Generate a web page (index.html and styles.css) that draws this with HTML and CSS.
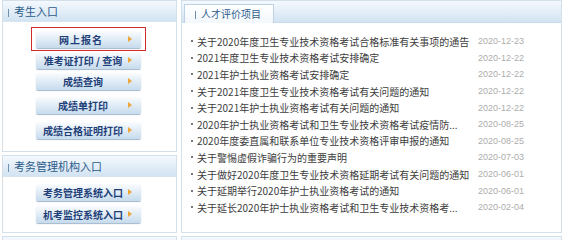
FILE: index.html
```html
<!DOCTYPE html>
<html lang="zh-CN">

<head>
    <meta charset="UTF-8">
    <title>人才评价</title>
    <link rel="stylesheet" href="styles.css">
</head>

<body>
    <div class="page">
        <div class="side">
            <div class="box">
                <div class="box-title"><span class="bar"></span>考生入口</div>
                <div class="btns exam">
                    <a class="btn current">网上报名</a>
                    <a class="btn">准考证打印 / 查询</a>
                    <a class="btn">成绩查询</a>
                    <a class="btn">成绩单打印</a>
                    <a class="btn">成绩合格证明打印</a>
                </div>
            </div>
            <div class="box">
                <div class="box-title"><span class="bar"></span>考务管理机构入口</div>
                <div class="btns org">
                    <a class="btn">考务管理系统入口</a>
                    <a class="btn">机考监控系统入口</a>
                </div>
            </div>
            <div class="box">
                <div class="box-title"></div>
            </div>
        </div>
        <div class="main">
            <div class="panel">
                <div class="tabbar">
                    <div class="tab"><span class="bar"></span>人才评价项目</div>
                </div>
                <ul class="news">
                    <li><span class="title">关于2020年度卫生专业技术资格考试合格标准有关事项的通告</span><span class="date">2020-12-23</span></li>
                    <li><span class="title">2021年度卫生专业技术资格考试安排确定</span><span class="date">2020-12-22</span></li>
                    <li><span class="title">2021年护士执业资格考试安排确定</span><span class="date">2020-12-22</span></li>
                    <li><span class="title">关于2021年度卫生专业技术资格考试有关问题的通知</span><span class="date">2020-12-22</span></li>
                    <li><span class="title">关于2021年护士执业资格考试有关问题的通知</span><span class="date">2020-12-22</span></li>
                    <li><span class="title">2020年护士执业资格考试和卫生专业技术资格考试疫情防...</span><span class="date">2020-08-25</span></li>
                    <li><span class="title">2020年度委直属和联系单位专业技术资格评审申报的通知</span><span class="date">2020-08-25</span></li>
                    <li><span class="title">关于警惕虚假诈骗行为的重要声明</span><span class="date">2020-07-03</span></li>
                    <li><span class="title">关于做好2020年度卫生专业技术资格延期考试有关问题的通知</span><span class="date">2020-06-01</span></li>
                    <li><span class="title">关于延期举行2020年护士执业资格考试的通知</span><span class="date">2020-06-01</span></li>
                    <li><span class="title">关于延长2020年护士执业资格考试和卫生专业技术资格考...</span><span class="date">2020-02-04</span></li>
                </ul>
            </div>
            <div class="panel next">
                <div class="tabbar"></div>
            </div>
        </div>
    </div>
</body>

</html>
```

FILE: styles.css
```css
body {
    margin: 0;
    background: #fff;
    font-family: "Noto Sans CJK SC", "Liberation Sans", sans-serif;
    font-size: 10px;
    color: #3d3d3d;
}

.page {
    display: flex;
    gap: 4px;
    padding-left: 2px;
    height: 240px;
    overflow: hidden;
}

/* 左侧入口 */
.side {
    width: 175px;
    display: flex;
    flex-direction: column;
    gap: 3px;
}

.box {
    border: 1px solid #d3dfe9;
}

.box-title {
    height: 20px;
    line-height: 20px;
    padding-left: 5px;
    background: linear-gradient(#f4f9fd, #d2e3f2);
    border-bottom: 1px solid #d8e4ee;
    color: #2c5b8a;
    font-size: 11px;
}

.bar {
    display: inline-block;
    width: 1px;
    height: 8px;
    background: #6d8fb2;
    margin-right: 5px;
    vertical-align: -1px;
}

.btns {
    display: flex;
    flex-direction: column;
    align-items: flex-start;
    padding-left: 33px;
}

.btns.exam {
    padding-top: 9px;
    padding-bottom: 12px;
}

.btns.org {
    padding-top: 7px;
    padding-bottom: 9px;
    gap: 5px;
}

.btns.exam .btn:nth-child(2),
.btns.exam .btn:nth-child(3) {
    margin-top: 4px;
}

.btns.exam .btn:nth-child(4) {
    margin-top: 7px;
}

.btns.exam .btn:nth-child(5) {
    margin-top: 8px;
}

.btn {
    position: relative;
    width: 90px;
    height: 17px;
    line-height: 17px;
    padding-left: 2px;
    padding-right: 13px;
    border-radius: 2px;
    background: linear-gradient(#fafcfe, #c6dbed);
    box-shadow: 0 1px 1px #a3b8cb;
    color: #1f3f78;
    font-weight: bold;
    text-align: center;
    white-space: nowrap;
    cursor: pointer;
}

/* 按钮右侧小箭头 */
.btn::after {
    content: "";
    position: absolute;
    right: 9px;
    top: 5px;
    border-left: 4px solid #eea53a;
    border-top: 3.5px solid transparent;
    border-bottom: 3.5px solid transparent;
}

/* 当前选中项的红框 */
.btn.current::before {
    content: "";
    position: absolute;
    left: -5px;
    right: -5px;
    top: -4px;
    bottom: -3px;
    border: 1.5px solid #d12b2b;
}

.btn.current {
    letter-spacing: 1px;
    padding-left: 0;
    padding-right: 15px;
}

/* 右侧列表 */
.main {
    width: 381px;
    display: flex;
    flex-direction: column;
    gap: 3px;
}

.panel {
    border: 1px solid #d3dfe9;
    height: 231px;
    flex-shrink: 0;
}

.panel.next {
    height: 30px;
}

.tabbar {
    height: 21px;
    display: flex;
    align-items: flex-end;
    padding-left: 2px;
    background: linear-gradient(#f4f9fd, #d2e3f2);
    border-bottom: 1px solid #c8d9e8;
}

.tab {
    height: 18px;
    line-height: 18px;
    margin-bottom: -1px;
    padding: 0 12px 0 10px;
    background: linear-gradient(#ffffff, #f3f8fc);
    border: 1px solid #bcd1e3;
    border-bottom: none;
    color: #2c5b8a;
    font-size: 10px;
}

.news {
    list-style: none;
    margin: 0;
    padding: 10px 37px 0 9px;
}

.news li {
    display: flex;
    align-items: center;
    height: 16.6px;
    white-space: nowrap;
}

.news li::before {
    content: "";
    width: 2px;
    height: 2px;
    background: #777;
    margin-right: 4px;
}

.news .title {
    flex: 1;
    overflow: hidden;
}

.news .date {
    font-family: "Liberation Sans", sans-serif;
    font-size: 9px;
    color: #adadad;
}
```
